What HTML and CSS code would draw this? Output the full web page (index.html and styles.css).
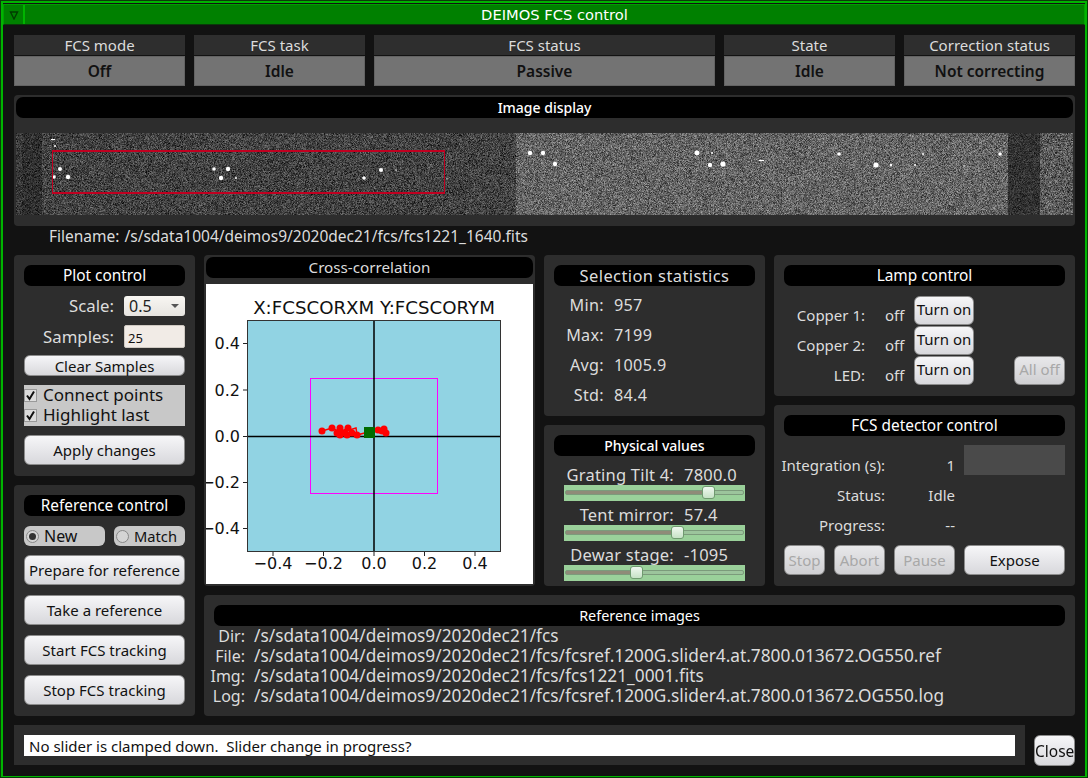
FILE: index.html
```html
<!DOCTYPE html>
<html lang="en">
<head>
  <meta charset="UTF-8">
  <title>DEIMOS FCS control</title>
  <link rel="stylesheet" href="styles.css">
</head>
<body>
  <div class="window">
    <div class="titlebar">
      <div class="menu-btn"><svg width="10" height="10" viewBox="0 0 10 10"><path d="M1.500 2 H8.500 L5 9 Z" fill="none" stroke="#003c00" stroke-width="1.400"/></svg></div>
      <div class="title">DEIMOS FCS control</div>
    </div>

    <div class="content">
      <div class="status-row">
        <div class="status-item"><div class="status-head">FCS mode</div><div class="status-value">Off</div></div>
        <div class="status-item"><div class="status-head">FCS task</div><div class="status-value">Idle</div></div>
        <div class="status-item wide"><div class="status-head">FCS status</div><div class="status-value">Passive</div></div>
        <div class="status-item"><div class="status-head">State</div><div class="status-value">Idle</div></div>
        <div class="status-item"><div class="status-head">Correction status</div><div class="status-value">Not correcting</div></div>
      </div>

      <div class="image-panel">
        <div class="heading small">Image display</div>
        <canvas id="ccd" class="ccd" width="1057" height="82"></canvas>
      </div>
      <div class="filename"><span>Filename:</span><span>/s/sdata1004/deimos9/2020dec21/fcs/fcs1221_1640.fits</span></div>

      <div class="main">
        <div class="left-col">
          <div class="panel plot-control">
            <div class="heading">Plot control</div>
            <div class="form-row scale-row">
              <label>Scale:</label>
              <div class="dropdown">0.5<svg width="10" height="6" viewBox="0 0 10 6"><path d="M1 1 H9 L5 5 Z" fill="#555"/></svg></div>
            </div>
            <div class="form-row samples-row">
              <label>Samples:</label>
              <input class="num-input" type="text" value="25">
            </div>
            <button class="btn clear-btn">Clear Samples</button>
            <div class="checks">
              <div class="check"><span class="box"><svg width="11" height="11" viewBox="0 0 11 11"><path d="M2 5.500 L4.500 9 L9 1.500" fill="none" stroke="#111" stroke-width="2"/></svg></span>Connect points</div>
              <div class="check"><span class="box"><svg width="11" height="11" viewBox="0 0 11 11"><path d="M2 5.500 L4.500 9 L9 1.500" fill="none" stroke="#111" stroke-width="2"/></svg></span>Highlight last</div>
            </div>
            <button class="btn tall">Apply changes</button>
          </div>

          <div class="panel ref-control">
            <div class="heading">Reference control</div>
            <div class="radios">
              <div class="radio new"><span class="dot on"></span>New</div>
              <div class="radio match"><span class="dot"></span>Match</div>
            </div>
            <button class="btn tall">Prepare for reference</button>
            <button class="btn tall">Take a reference</button>
            <button class="btn tall">Start FCS tracking</button>
            <button class="btn tall">Stop FCS tracking</button>
          </div>
        </div>

        <div class="right-area">
          <div class="top-row">
            <div class="panel plot-panel">
              <div class="heading dim">Cross-correlation</div>
              <svg class="plot" width="327" height="300" viewBox="0 0 327 300">
                <rect x="41.500" y="36.500" width="253" height="231" fill="#91d3e3"/>
                <rect x="104.500" y="94.500" width="127" height="115" fill="none" stroke="#f0f" stroke-width="1"/>
                <path d="M41 152.500 H295 M168 36 V268" stroke="#000" stroke-width="1.500"/>
                <path d="M116 147 L126 144 L134 148 L142 144 L130 150 L150 144 L151 151 L170 146" fill="none" stroke="#f00" stroke-width="1.500"/>
                <g fill="#f00">
                  <circle cx="116" cy="147" r="3.500"/><circle cx="126" cy="144" r="3.500"/><circle cx="134" cy="144" r="3.500"/>
                  <circle cx="142" cy="144" r="3.500"/><circle cx="131" cy="149" r="3.500"/><circle cx="134" cy="151" r="3.500"/>
                  <circle cx="139" cy="149" r="3.500"/><circle cx="141" cy="151" r="3.500"/><circle cx="146" cy="149" r="3.500"/>
                  <circle cx="151" cy="151" r="3.500"/><circle cx="172" cy="146" r="3.500"/><circle cx="176" cy="147" r="3.500"/>
                  <circle cx="178" cy="145" r="3.500"/><circle cx="180" cy="149" r="3.500"/>
                </g>
                <rect x="158" y="143" width="11" height="11" fill="#006b00"/>
                <rect x="41.500" y="36.500" width="253" height="231" fill="none" stroke="#333" stroke-width="1"/>
                <path d="M67 268 V272 M117.500 268 V272 M168 268 V272 M218.500 268 V272 M269 268 V272 M37 59.500 H41 M37 106 H41 M37 152.500 H41 M37 198.500 H41 M37 244.500 H41" stroke="#222" stroke-width="1"/>
                <text class="plot-title" x="168" y="30" text-anchor="middle">X:FCSCORXM Y:FCSCORYM</text>
                <g class="tick" text-anchor="middle">
                  <text x="67" y="285">−0.4</text><text x="117.500" y="285">−0.2</text><text x="168" y="285">0.0</text><text x="218.500" y="285">0.2</text><text x="269" y="285">0.4</text>
                </g>
                <g class="tick" text-anchor="end">
                  <text x="34" y="65">0.4</text><text x="34" y="112">0.2</text><text x="34" y="158">0.0</text><text x="34" y="204">−0.2</text><text x="34" y="250">−0.4</text>
                </g>
              </svg>
            </div>

            <div class="mid-col">
              <div class="panel stats">
                <div class="heading plain">Selection statistics</div>
                <div class="stat-grid">
                  <span>Min:</span><span>957</span>
                  <span>Max:</span><span>7199</span>
                  <span>Avg:</span><span>1005.9</span>
                  <span>Std:</span><span>84.4</span>
                </div>
              </div>
              <div class="panel physical">
                <div class="heading small">Physical values</div>
                <div class="phys-row"><span>Grating Tilt 4:</span><span>7800.0</span></div>
                <div class="slider"><div class="trough"><div class="fill" style="width: 81%"><div class="thumb"></div></div></div></div>
                <div class="phys-row"><span>Tent mirror:</span><span>57.4</span></div>
                <div class="slider"><div class="trough"><div class="fill" style="width: 63%"><div class="thumb"></div></div></div></div>
                <div class="phys-row"><span>Dewar stage:</span><span>-1095</span></div>
                <div class="slider"><div class="trough"><div class="fill" style="width: 40%"><div class="thumb"></div></div></div></div>
              </div>
            </div>

            <div class="right-col">
              <div class="panel lamp">
                <div class="heading">Lamp control</div>
                <div class="lamp-grid">
                  <span class="lamp-label">Copper 1:</span><span class="lamp-val">off</span><button class="btn">Turn on</button><span></span>
                  <span class="lamp-label">Copper 2:</span><span class="lamp-val">off</span><button class="btn">Turn on</button><span></span>
                  <span class="lamp-label">LED:</span><span class="lamp-val">off</span><button class="btn">Turn on</button><button class="btn" disabled>All off</button>
                </div>
              </div>
              <div class="panel detector">
                <div class="heading">FCS detector control</div>
                <div class="det-grid">
                  <span class="det-label">Integration (s):</span><span class="det-val">1</span><div class="det-entry"></div>
                  <span class="det-label">Status:</span><span class="det-val">Idle</span><span></span>
                  <span class="det-label">Progress:</span><span class="det-val">--</span><span></span>
                  <button class="btn" disabled>Stop</button><button class="btn" disabled>Abort</button><button class="btn" disabled>Pause</button><button class="btn">Expose</button>
                </div>
              </div>
            </div>
          </div>

          <div class="panel ref-images">
            <div class="heading slim">Reference images</div>
            <div class="ref-grid">
              <span>Dir:</span><span>/s/sdata1004/deimos9/2020dec21/fcs</span>
              <span>File:</span><span>/s/sdata1004/deimos9/2020dec21/fcs/fcsref.1200G.slider4.at.7800.013672.OG550.ref</span>
              <span>Img:</span><span>/s/sdata1004/deimos9/2020dec21/fcs/fcs1221_0001.fits</span>
              <span>Log:</span><span>/s/sdata1004/deimos9/2020dec21/fcs/fcsref.1200G.slider4.at.7800.013672.OG550.log</span>
            </div>
          </div>
        </div>
      </div>

      <div class="bottom">
        <div class="message-bar"><input class="message" type="text" value="No slider is clamped down.  Slider change in progress?"></div>
        <button class="btn close-btn">Close</button>
      </div>
    </div>
  </div>
  <script src="script.js"></script>
</body>
</html>
```

FILE: styles.css
```css
* {
  box-sizing: border-box;
}

body {
  margin: 0;
  background-color: #121212;
  font-family: "Noto Sans", "Open Sans", sans-serif;
  font-size: 15px;
  color: #dcdcdc;
  overflow: hidden;
}

.window {
  width: 1088px;
  height: 778px;
  border: 3px solid #00b400;
  border-bottom-width: 2px;
  outline: 1px solid #0a3a0a;
  outline-offset: -1px;
}

/* title bar */
.titlebar {
  display: flex;
  height: 21px;
  margin-top: 1px;
  background-color: #008000;
  border: 1px solid #00a000;
  border-bottom-color: #0a3a0a;
}

.menu-btn {
  width: 21px;
  display: flex;
  align-items: center;
  justify-content: center;
  border-right: 2px solid #00b400;
}

.title {
  flex: 1;
  text-align: center;
  color: #fff;
  font-family: "DejaVu Sans", sans-serif;
  font-size: 14.700px;
  line-height: 19px;
}

.content {
  padding: 10px 10px 0 11px;
}

/* status row */
.status-row {
  display: flex;
  gap: 9px;
}

.status-item {
  width: 171px;
}

.status-item.wide {
  width: 341px;
}

.status-head {
  height: 20px;
  background-color: #2e2e2e;
  text-align: center;
  line-height: 21px;
}

.status-value {
  height: 30px;
  margin-top: 1px;
  background-color: #737373;
  border: 1px solid #636363;
  color: #111;
  font-size: 15.500px;
  font-weight: 600;
  text-align: center;
  line-height: 28px;
}

/* shared */
.panel {
  background-color: #2d2d2d;
  border-radius: 4px;
  padding: 10px;
}

.heading {
  height: 21px;
  background-color: #000;
  border-radius: 7px;
  color: #fff;
  font-size: 15.400px;
  text-align: center;
  line-height: 21px;
}

.heading.small {
  font-size: 14px;
  font-weight: 500;
}

.heading.dim {
  color: #dcdcdc;
  font-size: 15.200px;
}

.heading.plain {
  color: #dcdcdc;
  font-size: 16.500px;
  letter-spacing: 0.400px;
}

.heading.slim {
  font-size: 14.400px;
}

.btn {
  height: 100%;
  padding: 0;
  border: 1px solid #8c8c8c;
  border-radius: 6px;
  background: linear-gradient(#f6f6f8, #d8d8dc);
  color: #111;
  font-family: inherit;
  font-size: 15px;
  white-space: nowrap;
}

.btn:disabled {
  color: #a8a8a8;
  background: linear-gradient(#e8e8ea, #cfcfd2);
}

.btn.tall {
  width: 100%;
  height: 30px;
}

/* image */
.image-panel {
  height: 131px;
  margin-top: 9px;
  padding: 2px;
  background-color: #2d2d2d;
  border-radius: 4px;
}

.ccd {
  display: block;
  margin-top: 15px;
}

.filename {
  display: flex;
  gap: 5px;
  height: 20px;
  padding-left: 35px;
  font-size: 15.500px;
  line-height: 20px;
}

.main {
  display: flex;
  gap: 9px;
  margin-top: 9px;
}

/* left column */
.left-col {
  width: 181px;
  display: flex;
  flex-direction: column;
  gap: 9px;
}

.plot-control {
  height: 221px;
}

.form-row {
  display: flex;
  align-items: center;
  margin-top: 9px;
}

.scale-row {
  height: 20px;
  margin-top: 10px;
}

.samples-row {
  height: 23px;
}

.form-row label {
  width: 90px;
  margin-right: 10px;
  font-size: 16.800px;
  line-height: 20px;
  text-align: right;
}

.dropdown {
  width: 61px;
  height: 20px;
  display: flex;
  align-items: center;
  justify-content: space-between;
  padding: 0 5px;
  background: linear-gradient(#f8f6f2, #e6e4e0);
  border-radius: 3px;
  color: #222;
  font-size: 16px;
  line-height: 20px;
}

.num-input {
  width: 61px;
  height: 23px;
  padding: 2px 3px 0;
  border: 1px solid #cfc9c2;
  border-radius: 2px;
  background-color: #f1ebe6;
  color: #111;
  font-family: inherit;
  font-size: 13px;
}

.clear-btn {
  width: 100%;
  height: 21px;
  margin-top: 7px;
}

.checks {
  height: 41px;
  margin: 9px 0;
  background-color: #c8c8c8;
  color: #111;
  font-size: 17px;
}

.check {
  display: flex;
  align-items: center;
  gap: 6px;
  height: 20px;
  line-height: 20px;
}

.box {
  width: 13px;
  height: 13px;
  border: 1px solid #999;
  background-color: #ddd;
  display: flex;
  align-items: center;
  justify-content: center;
}

.ref-control {
  height: 231px;
  display: flex;
  flex-direction: column;
  gap: 10px;
}

.radios {
  display: flex;
  justify-content: space-between;
  margin-bottom: -1px;
}

.radio {
  height: 20px;
  display: flex;
  align-items: center;
  gap: 5px;
  padding-left: 2px;
  background-color: #c8c8c8;
  border-radius: 6px;
  color: #111;
  font-size: 16px;
  line-height: 20px;
}

.radio.new {
  width: 81px;
}

.radio.match {
  width: 71px;
  font-size: 14.700px;
}

.dot {
  width: 13px;
  height: 13px;
  border-radius: 50%;
  border: 1px solid #888;
  background-color: #d4d4d4;
  display: flex;
  align-items: center;
  justify-content: center;
}

.dot.on::after {
  content: "";
  width: 7px;
  height: 7px;
  border-radius: 50%;
  background-color: #333;
}

/* right area */
.right-area {
  width: 871px;
  display: flex;
  flex-direction: column;
  gap: 9px;
}

.top-row {
  display: flex;
  gap: 9px;
  height: 331px;
}

.plot-panel {
  width: 331px;
  padding: 2px;
}

.plot {
  display: block;
  margin-top: 6px;
  background-color: #fff;
}

.plot-title {
  font-family: "DejaVu Sans", sans-serif;
  font-size: 18.200px;
  fill: #111;
}

.tick text {
  font-family: "DejaVu Sans", sans-serif;
  font-size: 16px;
  fill: #111;
}

.mid-col {
  width: 221px;
  display: flex;
  flex-direction: column;
  gap: 9px;
}

.stats {
  height: 161px;
}

.stat-grid {
  display: grid;
  grid-template-columns: 50px 1fr;
  grid-auto-rows: 30px;
  column-gap: 10px;
  margin-top: 4px;
  align-items: center;
  font-size: 16.200px;
  letter-spacing: 0.300px;
}

.stat-grid span:nth-child(odd) {
  text-align: right;
}

.physical {
  height: 161px;
  padding-bottom: 5px;
}

.physical .heading {
  margin-bottom: 9px;
}

.phys-row {
  display: grid;
  grid-template-columns: 120px 1fr;
  column-gap: 10px;
  height: 20px;
  font-size: 16.500px;
  line-height: 20px;
  white-space: nowrap;
  letter-spacing: 0.200px;
}

.phys-row span:first-child {
  text-align: right;
}

.slider {
  width: 181px;
  height: 16px;
  margin: 0 10px 4px;
  padding: 5px 1px 0;
  background-color: #9ad09a;
}

.trough {
  height: 5px;
  background-color: #9cc49c;
  border: 1px solid #7b9a7b;
  border-radius: 2px;
}

.fill {
  position: relative;
  height: 3px;
  background-color: #8f8a78;
}

.thumb {
  position: absolute;
  right: -6px;
  top: -5px;
  width: 13px;
  height: 13px;
  border: 1px solid #6f9a6f;
  border-radius: 3px;
  background: linear-gradient(#f0f8f0, #c6e2c6);
}

.right-col {
  width: 301px;
  display: flex;
  flex-direction: column;
  gap: 9px;
}

.lamp {
  height: 141px;
}

.lamp-grid {
  display: grid;
  grid-template-columns: 81px 31px 60px 82px;
  grid-auto-rows: 29px;
  column-gap: 9px;
  row-gap: 1px;
  margin-top: 10px;
}

.lamp-grid .btn {
  padding-bottom: 3px;
}

.lamp-grid button:disabled {
  width: 51px;
  justify-self: end;
}

.lamp-label {
  text-align: right;
  align-self: end;
  line-height: 20px;
}

.lamp-val {
  margin-left: 11px;
  align-self: end;
  line-height: 20px;
}

.detector {
  height: 181px;
}

.det-grid {
  display: grid;
  grid-template-columns: 41px 51px 61px 101px;
  grid-template-rows: 30px 30px 30px 40px;
  column-gap: 9px;
  margin-top: 9px;
}

.det-label {
  grid-column: 1 / 3;
  justify-self: end;
  align-self: end;
  line-height: 20px;
  white-space: nowrap;
}

.det-val {
  align-self: end;
  line-height: 20px;
  text-align: right;
}

.det-entry {
  height: 30px;
  background-color: #4a4a4a;
}

.det-grid .btn {
  height: 30px;
  align-self: end;
}

.ref-images {
  height: 121px;
}

.ref-grid {
  display: grid;
  grid-template-columns: 31px 1fr;
  grid-auto-rows: 20px;
  column-gap: 9px;
  font-size: 17.300px;
  line-height: 20px;
  white-space: nowrap;
}

.ref-grid span:nth-child(odd) {
  justify-self: end;
  font-size: 16px;
}

/* bottom */
.bottom {
  display: flex;
  gap: 9px;
  margin-top: 9px;
  align-items: flex-start;
}

.message-bar {
  width: 1011px;
  height: 40px;
  padding: 10px;
  background-color: #2d2d2d;
}

.message {
  display: block;
  width: 100%;
  height: 21px;
  padding: 0 5px;
  border: 0;
  background-color: #fff;
  color: #111;
  font-family: inherit;
  font-size: 15px;
}

.close-btn {
  width: 41px;
  height: 31px;
  margin-top: 10px;
  font-size: 15.500px;
}
```

FILE: script.js
```js
// draws the fake CCD frame, no image files available
var canvas = document.getElementById("ccd");
var ctx = canvas.getContext("2d");
var w = canvas.width, h = canvas.height;
var img = ctx.createImageData(w, h);
var seed = 12345;

function rnd() {
  seed = (seed * 1664525 + 1013904223) % 4294967296;
  return seed / 4294967296;
}

function level(x) {
  if (x < 6) return [56, 18];
  if (x < 26) return [46, 16];
  if (x < 500) return [66, 22];
  if (x < 992) return [100, 26];
  if (x < 1024) return [50, 14];
  return [90, 26];
}

for (var y = 0; y < h; y++) {
  for (var x = 0; x < w; x++) {
    var n = (rnd() + rnd() + rnd() - 1.5) * 2;
    var l = level(x);
    var v = l[0] + n * l[1];
    var i = (y * w + x) * 4;
    img.data[i] = img.data[i + 1] = img.data[i + 2] = Math.max(0, Math.min(255, v));
    img.data[i + 3] = 255;
  }
}
ctx.putImageData(img, 0, 0);

// stars, page coordinates
var stars = [
  [60, 169, 2], [54, 177, 1.800], [68, 177, 2.200], [214, 169, 1.800], [228, 169, 2.200], [221, 178, 2.200],
  [236, 178, 1], [364, 178, 1.800], [381, 170, 2], [396, 170, 0.800], [55, 146, 1], [447, 179, 0.700],
  [530, 153, 2.200], [543, 153, 2.200], [555, 164, 2.200], [697, 153, 2.400], [712, 153, 1],
  [710, 165, 2.200], [723, 164, 2.600], [839, 154, 1.800], [876, 165, 2.600], [891, 165, 1.200], [915, 165, 1],
  [923, 154, 1], [1000, 154, 1.800], [964, 166, 0.800]
];
ctx.fillStyle = "#fff";
stars.forEach(function (s) {
  ctx.beginPath();
  ctx.arc(s[0] - 16, s[1] - 133, s[2], 0, Math.PI * 2);
  ctx.fill();
});
ctx.fillRect(35, 6, 4, 1);
ctx.fillRect(743, 27, 5, 1);

// selection box
ctx.fillStyle = "#c00020";
ctx.fillRect(36, 17, 393, 2);
ctx.fillRect(36, 59, 393, 2);
ctx.fillRect(36, 17, 1, 44);
ctx.fillRect(428, 17, 1, 44);
```
